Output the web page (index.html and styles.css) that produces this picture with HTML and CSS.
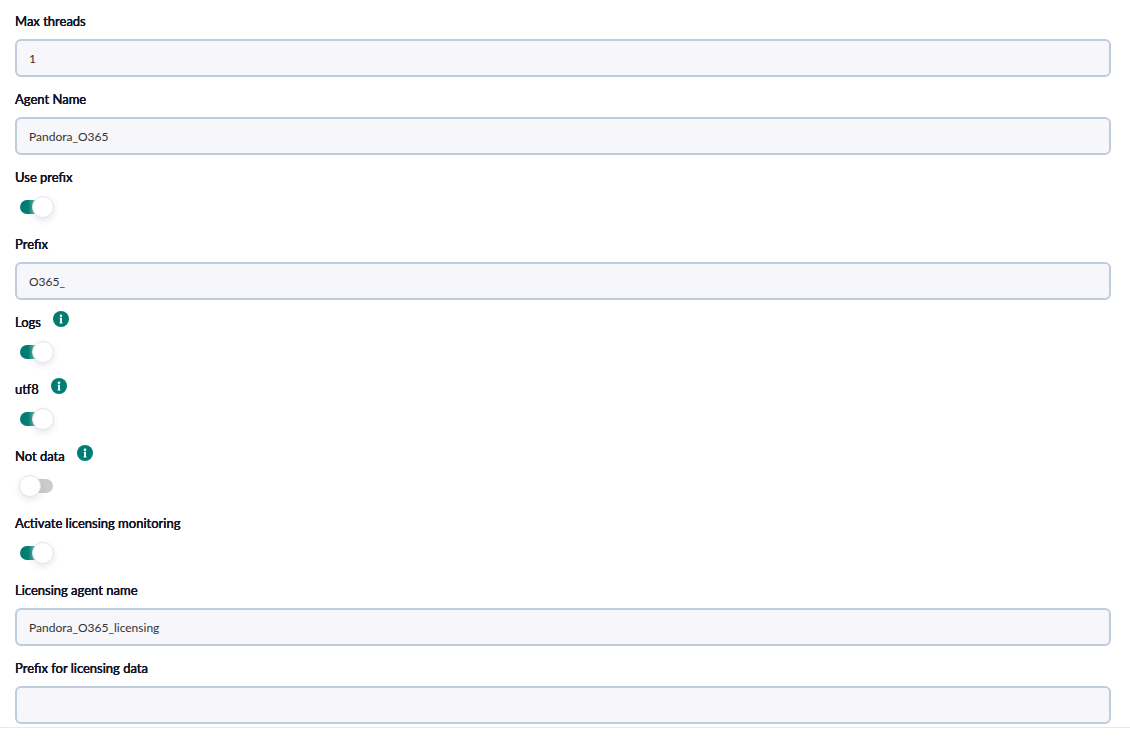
FILE: index.html
```html
<!DOCTYPE html>
<html lang="en">
<head>
  <meta charset="UTF-8">
  <meta name="viewport" content="width=device-width, initial-scale=1">
  <title>Office 365 | Task settings</title>
  <link rel="stylesheet" href="styles.css">
</head>
<body>
  <!-- Shared info icon -->
  <svg class="sprite" aria-hidden="true">
    <symbol id="info" viewBox="0 0 16 16">
      <circle cx="8" cy="8" r="8" fill="#007d72"/>
      <path d="M6.8 6.8h2.2v4.6h.5v1.1H6.5v-1.1h.6V7.9h-.3z" fill="#fff"/>
      <circle cx="8" cy="4.7" r="1.3" fill="#fff"/>
    </symbol>
  </svg>

  <form class="settings-form">
    <div class="field">
      <div class="field-title"><label for="maxThreads">Max threads</label></div>
      <input type="text" class="text-input" id="maxThreads" value="1">
    </div>

    <div class="field">
      <div class="field-title"><label for="agentName">Agent Name</label></div>
      <input type="text" class="text-input" id="agentName" value="Pandora_O365">
    </div>

    <div class="field">
      <div class="field-title"><label for="usePrefix">Use prefix</label></div>
      <input type="checkbox" class="switch" id="usePrefix" checked>
    </div>

    <div class="field">
      <div class="field-title"><label for="prefix">Prefix</label></div>
      <input type="text" class="text-input" id="prefix" value="O365_">
    </div>

    <div class="field">
      <div class="field-title">
        <label for="logs">Logs</label>
        <svg class="info-icon" aria-hidden="true"><use href="#info"/></svg>
      </div>
      <input type="checkbox" class="switch" id="logs" checked>
    </div>

    <div class="field">
      <div class="field-title">
        <label for="utf8">utf8</label>
        <svg class="info-icon" aria-hidden="true"><use href="#info"/></svg>
      </div>
      <input type="checkbox" class="switch" id="utf8" checked>
    </div>

    <div class="field">
      <div class="field-title">
        <label for="notData">Not data</label>
        <svg class="info-icon" aria-hidden="true"><use href="#info"/></svg>
      </div>
      <input type="checkbox" class="switch" id="notData">
    </div>

    <div class="field">
      <div class="field-title"><label for="licensing">Activate licensing monitoring</label></div>
      <input type="checkbox" class="switch" id="licensing" checked>
    </div>

    <div class="field">
      <div class="field-title"><label for="licensingAgent">Licensing agent name</label></div>
      <input type="text" class="text-input" id="licensingAgent" value="Pandora_O365_licensing">
    </div>

    <div class="field">
      <div class="field-title"><label for="licensingPrefix">Prefix for licensing data</label></div>
      <input type="text" class="text-input" id="licensingPrefix">
    </div>
  </form>
</body>
</html>
```
FILE: styles.css
```css
/* Global Styles */
*,
*::before {
  box-sizing: border-box;
  margin: 0;
  padding: 0;
}
body {
  background: #fff;
  color: #161628;
  font-family: Lato, "Open Sans", sans-serif;
}
.sprite {
  display: none;
}
/* Form */
.settings-form {
  display: flex;
  flex-direction: column;
  gap: 11px;
  padding: 10px 19px 3px 15px;
  border-bottom: 1px solid #e5e9ed;
}
.field {
  display: flex;
  flex-direction: column;
  gap: 8px;
}
.field-title {
  display: flex;
  gap: 12px;
  height: 21px;
  font-size: 13px;
  line-height: 22px;
  text-shadow: 0 0 0 #161628, 0 0 0 #161628;
}
.info-icon {
  width: 16px;
  height: 16px;
}
/* Text boxes */
.text-input {
  width: 100%;
  height: 38px;
  padding: 0 12px;
  border: 2px solid #c0ccdc;
  border-radius: 6px;
  background: #f6f6fb;
  color: #343434;
  font-family: inherit;
  font-size: 12px;
}
/* Switches */
.switch {
  display: flex;
  align-items: center;
  appearance: none;
  width: 33px;
  height: 14px;
  margin: 5px 5px 8px;
  border-radius: 7px;
  background: #cbcbcb;
  cursor: pointer;
}
.switch::before {
  content: "";
  flex: none;
  width: 22px;
  height: 22px;
  margin-left: -1px;
  border: 1px solid #e4e4ee;
  border-radius: 50%;
  background: #fff;
  box-shadow: 0 3px 6px rgba(60, 70, 110, 0.12);
}
.switch:checked {
  justify-content: flex-end;
  background: linear-gradient(to right, #007d72 24%, #5aaca4 42%);
}
.switch:checked::before {
  margin-right: -1px;
}
```
